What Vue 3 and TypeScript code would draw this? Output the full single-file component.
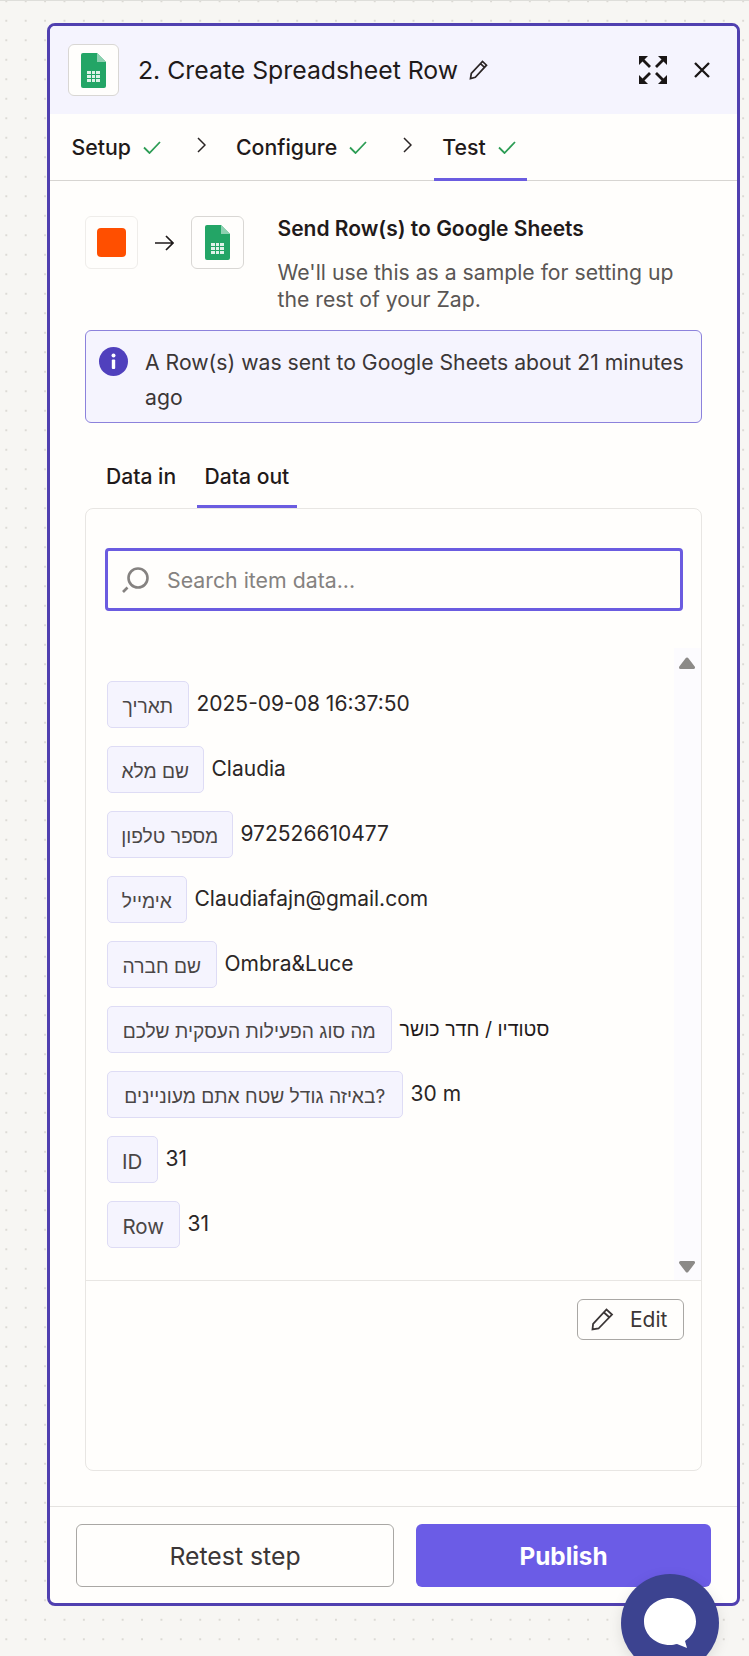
<script setup lang="ts">
interface Row { label: string; value: string; width: number }
const rows: Row[] = [
  { label: 'תאריך', value: '2025-09-08 16:37:50', width: 81.5 },
  { label: 'שם מלא', value: 'Claudia', width: 96.5 },
  { label: 'מספר טלפון', value: '972526610477', width: 125.5 },
  { label: 'אימייל', value: 'Claudiafajn@gmail.com', width: 79.5 },
  { label: 'שם חברה', value: 'Ombra&Luce', width: 109.5 },
  { label: 'מה סוג הפעילות העסקית שלכם', value: 'סטודיו / חדר כושר', width: 284.5 },
  { label: 'באיזה גודל שטח אתם מעוניינים?', value: '30 m', width: 295.5 },
  { label: 'ID', value: '31', width: 50.5 },
  { label: 'Row', value: '31', width: 72.5 },
]
const isHebrew = (s: string): boolean => /[\u0590-\u05FF]/.test(s)
</script>

<template>
  <div class="page">
    <div class="panel">
      <header class="head">
        <div class="app-box">
          <svg width="25" height="35" viewBox="0 0 25 35"><path d="M2 0H16L25 9V33a2 2 0 0 1-2 2H2a2 2 0 0 1-2-2V2a2 2 0 0 1 2-2Z" fill="#23a566"/><path d="M16 0L25 9H16Z" fill="#8ed1b1"/><path d="M6 18H19V29H6Z" fill="#dff2e8"/><path d="M6 21.500H19M6 25.500H19M10.500 18V29M14.500 18V29" stroke="#23a566" stroke-width="1"/></svg>
        </div>
        <h1 class="title">2. Create Spreadsheet Row</h1>
        <svg class="pencil" width="20" height="20" viewBox="0 0 20 20" fill="none" stroke="#2b2525" stroke-width="1.700"><path d="M1.500 18.500l.8-5L13.500 1.500l4 3.700L6.300 17.300l-4.800 1.200ZM11.500 3.700l4 3.700"/></svg>
        <div class="head-actions">
          <svg width="28" height="28" viewBox="0 0 28 28" fill="#1a1616">
            <path d="M0 0h9L0 9Z"/><path d="M28 0h-9l9 9Z"/><path d="M0 28h9L0 19Z"/><path d="M28 28h-9l9-9Z"/>
            <path d="M3 3l8 8M25 3l-8 8M3 25l8-8M25 25l-8-8" stroke="#1a1616" stroke-width="2.800"/>
          </svg>
          <svg width="16" height="16" viewBox="0 0 16 16" stroke="#1a1616" stroke-width="2.300"><path d="M1 1l14 14M15 1L1 15"/></svg>
        </div>
      </header>

      <nav class="steps">
        <div class="step"><span>Setup</span><svg width="18" height="13" viewBox="0 0 18 13" fill="none" stroke="#2d9d55" stroke-width="1.800"><path d="M1 6.500l5.500 5.500L17 1"/></svg></div>
        <svg class="chev" width="9" height="16" viewBox="0 0 9 16" fill="none" stroke="#2b2525" stroke-width="1.500"><path d="M1 1l7 7-7 7"/></svg>
        <div class="step"><span>Configure</span><svg width="18" height="13" viewBox="0 0 18 13" fill="none" stroke="#2d9d55" stroke-width="1.800"><path d="M1 6.500l5.500 5.500L17 1"/></svg></div>
        <svg class="chev" width="9" height="16" viewBox="0 0 9 16" fill="none" stroke="#2b2525" stroke-width="1.500"><path d="M1 1l7 7-7 7"/></svg>
        <div class="step active"><span>Test</span><svg width="18" height="13" viewBox="0 0 18 13" fill="none" stroke="#2d9d55" stroke-width="1.800"><path d="M1 6.500l5.500 5.500L17 1"/></svg></div>
      </nav>

      <main class="body">
        <section class="intro">
          <div class="flow">
            <div class="mini-box light"><span class="orange"></span></div>
            <svg class="arrow" width="19" height="16" viewBox="0 0 19 16" fill="none" stroke="#1f1a1a" stroke-width="1.700"><path d="M0 8h18M11 1l7 7-7 7"/></svg>
            <div class="mini-box">
              <svg width="25" height="35" viewBox="0 0 25 35"><path d="M2 0H16L25 9V33a2 2 0 0 1-2 2H2a2 2 0 0 1-2-2V2a2 2 0 0 1 2-2Z" fill="#23a566"/><path d="M16 0L25 9H16Z" fill="#8ed1b1"/><path d="M6 18H19V29H6Z" fill="#dff2e8"/><path d="M6 21.500H19M6 25.500H19M10.500 18V29M14.500 18V29" stroke="#23a566" stroke-width="1"/></svg>
            </div>
          </div>
          <div class="intro-text">
            <h2>Send Row(s) to Google Sheets</h2>
            <p>We'll use this as a sample for setting up the rest of your Zap.</p>
          </div>
        </section>

        <div class="notice">
          <svg class="info" width="29" height="29" viewBox="0 0 29 29"><circle cx="14.500" cy="14.500" r="14.500" fill="#5040bd"/><rect x="12.800" y="12.500" width="3.400" height="9.500" rx="1" fill="#fff"/><circle cx="14.500" cy="8.500" r="2" fill="#fff"/></svg>
          <p>A Row(s) was sent to Google Sheets about 21 minutes ago</p>
        </div>

        <div class="tabs">
          <div class="tab">Data in</div>
          <div class="tab active">Data out</div>
        </div>

        <section class="card">
          <div class="search">
            <svg width="27" height="26" viewBox="0 0 27 26" fill="none" stroke="#858280" stroke-width="2.600"><circle cx="16" cy="11" r="9.500"/><path d="M1 25l4.500-4.500"/></svg>
            <span>Search item data...</span>
          </div>
          <div class="list">
            <div class="scroll">
              <svg class="tri up" width="16" height="12" viewBox="0 0 16 12"><path d="M8 2L14.500 10.500H1.500Z" fill="#8c8a88" stroke="#8c8a88" stroke-width="3" stroke-linejoin="round"/></svg>
              <svg class="tri down" width="16" height="12" viewBox="0 0 16 12"><path d="M8 10L14.500 1.500H1.500Z" fill="#8c8a88" stroke="#8c8a88" stroke-width="3" stroke-linejoin="round"/></svg>
            </div>
            <div v-for="r in rows" :key="r.label" class="row">
              <span class="label" :class="{ he: isHebrew(r.label) }" :style="{ width: r.width + 'px' }">{{ r.label }}</span>
              <span class="value" :class="{ he: isHebrew(r.value) }">{{ r.value }}</span>
            </div>
          </div>
          <div class="foot">
            <button class="edit" type="button">
              <svg width="23" height="23" viewBox="0 0 23 23" fill="none" stroke="#3b3636" stroke-width="1.800"><path d="M1.500 21.500l.6-5.500L15.500 1.500l5.500 5L7.500 20.500l-6 1ZM13 4.500l5.500 5"/></svg>
              <span>Edit</span>
            </button>
          </div>
        </section>
      </main>

      <footer class="actions">
        <button class="btn ghost" type="button">Retest step</button>
        <button class="btn primary" type="button">Publish</button>
      </footer>
    </div>

    <div class="chat">
      <svg width="52" height="50" viewBox="0 0 52 50"><path d="M26 0C40 0 52 10 52 23.500 52 32 47 39 41 43l2 7-10-4c-2 .5-4.500 1-7 1C12 47 0 37 0 23.500 0 10 12 0 26 0Z" fill="#fff"/></svg>
    </div>
  </div>
</template>

<style>
html, body { margin: 0; padding: 0; background: #f7f6f3; }
</style>

<style scoped>
.page {
  position: relative;
  width: 749px;
  height: 1656px;
  box-sizing: border-box;
  overflow: hidden;
  padding: 22px 0 0 47px;
  font-family: Inter, "Noto Sans", "Liberation Sans", "Noto Sans CJK SC", sans-serif;
  color: #1f1a1a;
  border-top: 1px solid #dededa;
  background-color: #f7f6f3;
  background-image: radial-gradient(circle, #dcdad5 1px, transparent 1.200px);
  background-size: 19.400px 19.500px;
  background-position: 16px 10px;
}
.panel {
  width: 693px;
  height: 1583px;
  box-sizing: border-box;
  display: flex;
  flex-direction: column;
  border: 3px solid #5040b0;
  border-radius: 8px;
  background: #fffefc;
  overflow: hidden;
}
.head {
  height: 88px;
  flex: none;
  box-sizing: border-box;
  display: flex;
  align-items: center;
  padding: 0 27px 0 18px;
  background: #f5f4fe;
}
.app-box {
  width: 51px;
  height: 52px;
  flex: none;
  box-sizing: border-box;
  display: flex;
  align-items: center;
  justify-content: center;
  border: 1px solid #d9d7d4;
  border-radius: 6px;
  background: #fffefc;
}
.title {
  margin: 0 0 0 19px;
  font-size: 24.800px;
  font-weight: 400;
  white-space: nowrap;
}
.pencil { margin-left: 11px; flex: none; }
.head-actions {
  margin-left: auto;
  display: flex;
  align-items: center;
  gap: 27px;
}
.steps {
  height: 67px;
  flex: none;
  box-sizing: border-box;
  display: flex;
  align-items: stretch;
  padding-left: 21.500px;
  border-bottom: 1px solid #d7d5d2;
}
.step {
  position: relative;
  display: flex;
  align-items: center;
  gap: 12px;
  font-size: 21.300px;
  font-weight: 500;
}
.step.active { padding: 0 11px 0 8px; margin-left: -8px; }
.step.active::after {
  content: "";
  position: absolute;
  left: 0;
  right: 0;
  bottom: -1px;
  height: 3px;
  background: #6b5ce0;
}
.chev { align-self: center; margin: -4px 30px 0 36px; flex: none; }
.body {
  flex: 1;
  min-height: 0;
  box-sizing: border-box;
  display: flex;
  flex-direction: column;
  padding: 35px 35px 35px 35px;
  border-bottom: 1px solid #e5e3e0;
}
.intro { display: flex; }
.flow {
  width: 192.500px;
  flex: none;
  display: flex;
  align-items: flex-start;
  gap: 17px;
}
.arrow { margin-top: 19px; }
.mini-box {
  width: 53px;
  height: 53px;
  flex: none;
  box-sizing: border-box;
  display: flex;
  align-items: center;
  justify-content: center;
  border: 1px solid #d9d7d4;
  border-radius: 6px;
  background: #fffefc;
}
.mini-box.light { border-color: #efedea; }
.orange {
  width: 29px;
  height: 29px;
  border-radius: 4px;
  background: #ff4f00;
}
.intro-text { flex: 1; min-width: 0; }
.intro-text h2 {
  margin: 0;
  font-size: 21px;
  line-height: 26px;
  font-weight: 600;
}
.intro-text p {
  margin: 17px 0 0;
  font-size: 21.200px;
  line-height: 27px;
  color: #5a5654;
}
.notice {
  margin-top: 17px;
  height: 93px;
  flex: none;
  box-sizing: border-box;
  display: flex;
  gap: 17px;
  padding: 14px 13px;
  border: 1px solid #8c82dc;
  border-radius: 6px;
  background: #f5f4fe;
}
.info { flex: none; margin-top: 2px; }
.notice p {
  margin: 0;
  font-size: 21.200px;
  line-height: 35px;
  color: #3b3636;
}
.tabs {
  display: flex;
  gap: 12.500px;
  margin-top: 21px;
  padding-left: 13px;
  height: 64px;
  flex: none;
}
.tab {
  box-sizing: border-box;
  height: 64px;
  display: flex;
  align-items: center;
  padding: 3px 8px 0;
  border-bottom: 3px solid transparent;
  font-size: 21.100px;
  font-weight: 500;
}
.tab.active { border-bottom-color: #6b5ce0; }
.card {
  flex: 1;
  min-height: 0;
  box-sizing: border-box;
  display: flex;
  flex-direction: column;
  border: 1px solid #e8e6e3;
  border-radius: 8px;
}
.search {
  margin: 39px 18px 0 19px;
  height: 63px;
  flex: none;
  box-sizing: border-box;
  display: flex;
  align-items: center;
  gap: 18px;
  padding-left: 14px;
  border: 3px solid #6b5ce0;
  border-radius: 4px;
  font-size: 21.300px;
  color: #858280;
}
.list {
  position: relative;
  margin-top: 37px;
  height: 633px;
  flex: none;
  box-sizing: border-box;
  padding: 33px 0 0 21px;
  border-bottom: 1px solid #e8e6e3;
}
.scroll {
  position: absolute;
  top: 0;
  right: 0;
  bottom: 0;
  width: 27px;
  background: #fcfbfe;
}
.tri {
  position: absolute;
  left: 5px;
}
.tri.up { top: 9px; }
.tri.down { bottom: 7px; }
.row {
  height: 65px;
  display: flex;
  align-items: flex-start;
  gap: 8px;
}
.label {
  box-sizing: border-box;
  height: 47px;
  flex: none;
  display: flex;
  align-items: center;
  justify-content: center;
  padding: 3px 0 0;
  border: 1px solid #dedcf5;
  border-radius: 5px;
  background: #f5f4fe;
  font-size: 20.500px;
  color: #4a4646;
  white-space: nowrap;
}
.label.he { font-size: 19.200px; }
.value {
  font-size: 21px;
  line-height: 46px;
  color: #2b2626;
  white-space: nowrap;
}
.value.he { font-size: 19.600px; color: #1f1a1a; }
.foot {
  display: flex;
  justify-content: flex-end;
  padding: 18px 17.500px 0 0;
}
.edit {
  width: 106.500px;
  height: 41px;
  box-sizing: border-box;
  display: flex;
  align-items: center;
  gap: 16px;
  padding: 0 0 0 13px;
  border: 1px solid #a9a7a4;
  border-radius: 6px;
  background: #fffefc;
  font: inherit;
  font-size: 21px;
  color: #3b3636;
}
.actions {
  flex: none;
  height: 96px;
  box-sizing: border-box;
  display: flex;
  gap: 22px;
  padding: 17px 26px 16px 26px;
}
.btn {
  height: 63px;
  box-sizing: border-box;
  border-radius: 6px;
  font: inherit;
}
.ghost {
  width: 318px;
  flex: none;
  border: 1px solid #a9a7a4;
  background: #fffefc;
  color: #3b3636;
  font-size: 24.800px;
}
.primary {
  flex: 1;
  border: 0;
  background: #6b5ce6;
  color: #fff;
  font-size: 24.300px;
  font-weight: 700;
}
.chat {
  position: absolute;
  left: 621px;
  top: 1573px;
  width: 98px;
  height: 98px;
  border-radius: 50%;
  background: #3c4390;
  box-shadow: 0 4px 14px rgba(0, 0, 0, 0.1);
  display: flex;
  align-items: flex-start;
  justify-content: center;
  padding-top: 24px;
  box-sizing: border-box;
}
</style>
